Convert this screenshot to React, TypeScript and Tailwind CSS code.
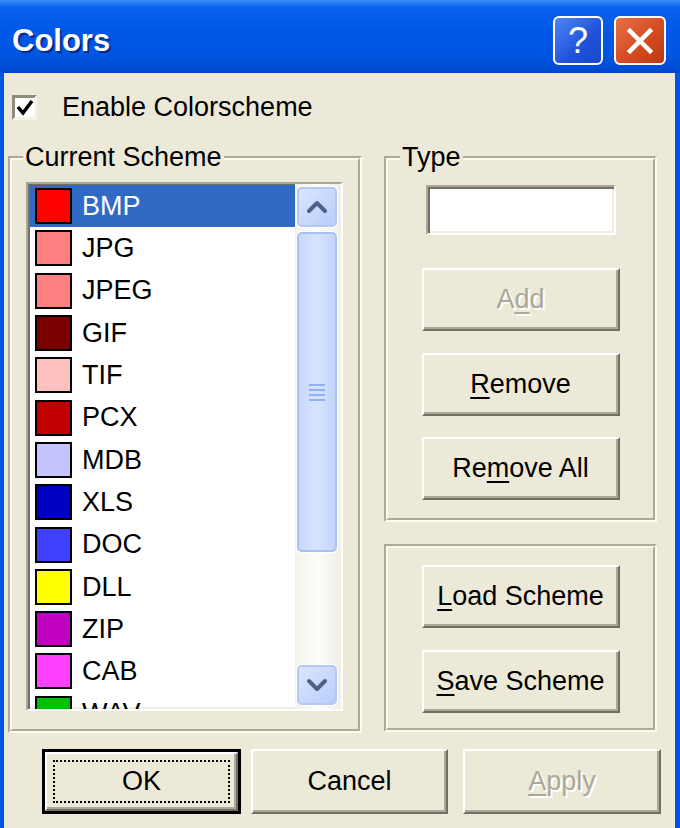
import React from 'react';

const items: [string, string][] = [
    ['BMP', '#ff0000'],
    ['JPG', '#ff8080'],
    ['JPEG', '#ff8080'],
    ['GIF', '#780000'],
    ['TIF', '#ffc0c0'],
    ['PCX', '#c00000'],
    ['MDB', '#c4c4ff'],
    ['XLS', '#0000c0'],
    ['DOC', '#4040ff'],
    ['DLL', '#ffff00'],
    ['ZIP', '#c000c0'],
    ['CAB', '#ff40ff'],
    ['WAV', '#00c000'],
];

const raised =
    'bg-[#ece9d8] border-2 border-t-white border-l-white border-b-[#716f64] border-r-[#716f64] shadow-[inset_-2px_-2px_0_#aca899]';
const etched = 'border-4 [border-style:groove] border-[#fffbea]';
const sunken =
    'border-2 border-t-[#aca899] border-l-[#aca899] border-b-white border-r-white shadow-[inset_2px_2px_0_#716f64,inset_-2px_-2px_0_#f1efe2]';

function Btn({ children, w = 'w-[198px]', h = 'h-[63px]', disabled = false }: { children: React.ReactNode; w?: string; h?: string; disabled?: boolean }) {
    return (
        <div
            className={`${w} ${h} ${raised} flex items-center justify-center text-[27px] ${
                disabled ? 'text-[#aca899] [text-shadow:2px_2px_0_#fff]' : 'text-black'
            }`}
        >
            {children}
        </div>
    );
}

function Chevron({ up }: { up?: boolean }) {
    return (
        <svg width="22" height="14" viewBox="0 0 22 14">
            <path
                d={up ? 'M3 11 L11 3 L19 11' : 'M3 3 L11 11 L19 3'}
                fill="none"
                stroke="#4d6185"
                strokeWidth="4"
                strokeLinecap="round"
                strokeLinejoin="round"
            />
        </svg>
    );
}

const scrollBtn =
    'h-[40px] rounded-[5px] border-2 border-[#b4c8f4] bg-[linear-gradient(135deg,#dbe6fe,#b8cdfa)] shadow-[0_0_0_1px_#fff] flex items-center justify-center';

export default function App() {
    return (
        <div className="w-[680px] h-[828px] bg-[#0054e3] flex flex-col overflow-hidden font-['Liberation_Sans',Arial,sans-serif]">
            {/* title bar */}
            <div className="h-[73px] shrink-0 flex items-center pl-[12px] pr-[14px] bg-[linear-gradient(180deg,#3a8cf8_0%,#0a62ee_10%,#0058e6_40%,#0054e1_80%,#0046cc_100%)]">
                <div className="flex-1 text-white font-bold text-[31px] pt-[10px] [text-shadow:2px_2px_0_#0a2a8a]">Colors</div>
                <div className="flex gap-[11px] mt-[8px]">
                    <div className="w-[50px] h-[49px] rounded-[6px] border-2 border-white bg-[linear-gradient(135deg,#4f86f7,#1f52da_60%,#1a47c4)] flex items-center justify-center text-white text-[36px] leading-none">
                        ?
                    </div>
                    <div className="w-[52px] h-[49px] rounded-[6px] border-2 border-white bg-[linear-gradient(135deg,#e8704a,#d2491f_60%,#bb3a14)] flex items-center justify-center">
                        <svg width="30" height="30" viewBox="0 0 30 30">
                            <path d="M5 5 L25 25 M25 5 L5 25" stroke="#fff" strokeWidth="4.5" strokeLinecap="square" />
                        </svg>
                    </div>
                </div>
            </div>

            {/* body */}
            <div className="flex-1 ml-[4px] mr-[5px] bg-[#ece9d8] flex flex-col text-[27px] text-black">
                {/* checkbox */}
                <div className="flex items-center pl-[8px] pt-[21px]">
                    <div className="w-[25px] h-[25px] bg-white border-[3px] border-t-[#8f8d80] border-l-[#8f8d80] border-b-[#f4f3ee] border-r-[#f4f3ee] flex items-center justify-center">
                        <svg width="18" height="18" viewBox="0 0 18 18">
                            <path d="M2 8 L7 14 L16 2" fill="none" stroke="#000" strokeWidth="3.5" />
                        </svg>
                    </div>
                    <span className="ml-[25px] leading-[27px]">Enable Colorscheme</span>
                </div>

                <div className="flex mt-[23px] pl-[4px] gap-[22px]">
                    {/* Current Scheme */}
                    <fieldset className={`w-[354px] h-[589px] ${etched}`}>
                        <legend className="ml-[11px] px-[2px] leading-[27px]">Current Scheme</legend>
                        <div className={`mt-[11px] ml-[14px] w-[317px] h-[529px] flex ${sunken} bg-white`}>
                            <div className="flex-1 overflow-hidden pt-[1px] pl-[2px]">
                                {items.map(([name, color], i) => (
                                    <div
                                        key={name}
                                        className={`h-[42.3px] flex items-center ${i === 0 ? 'bg-[#316ac5] text-white' : ''}`}
                                    >
                                        <div className="ml-[5px] w-[37px] h-[36px] border-2 border-black" style={{ backgroundColor: color }} />
                                        <span className="ml-[10px]">{name}</span>
                                    </div>
                                ))}
                            </div>
                            <div className="w-[46px] flex flex-col pt-[3px] pb-[4px] pl-[2px] pr-[4px] bg-[linear-gradient(90deg,#f4f2ea,#fdfdfa_50%,#f0eee5)]">
                                <div className={scrollBtn}>
                                    <Chevron up />
                                </div>
                                <div className="mt-[5px] h-[320px] rounded-[5px] border-2 border-[#a9c1f3] bg-[linear-gradient(90deg,#c6d8fc,#d6e4fe_50%,#c2d5fb)] shadow-[0_0_0_1px_#fff] flex flex-col items-center justify-center gap-[3px]">
                                    {[0, 1, 2, 3].map((k) => (
                                        <div key={k} className="w-[16px] h-[2px] bg-[#8eb0f4]" />
                                    ))}
                                </div>
                                <div className="flex-1" />
                                <div className={scrollBtn}>
                                    <Chevron />
                                </div>
                            </div>
                        </div>
                    </fieldset>

                    {/* right column */}
                    <div className="w-[273px] flex flex-col gap-[22px]">
                        <fieldset className={`h-[378px] ${etched} flex flex-col items-center`}>
                            <legend className="ml-[12px] px-[2px] leading-[27px]">Type</legend>
                            <div className={`mt-[14px] w-[190px] h-[50px] bg-white ${sunken}`} />
                            <div className="mt-[33px]">
                                <Btn disabled>
                                    A<span className="underline underline-offset-4">d</span>d
                                </Btn>
                            </div>
                            <div className="mt-[22px]">
                                <Btn>
                                    <span className="underline underline-offset-4">R</span>emove
                                </Btn>
                            </div>
                            <div className="mt-[21px]">
                                <Btn>
                                    Re<span className="underline underline-offset-4">m</span>ove All
                                </Btn>
                            </div>
                        </fieldset>
                        <div className={`h-[188px] ${etched} flex flex-col items-center pt-[17px] gap-[22px]`}>
                            <Btn>
                                <span className="underline underline-offset-4">L</span>oad Scheme
                            </Btn>
                            <Btn>
                                <span className="underline underline-offset-4">S</span>ave Scheme
                            </Btn>
                        </div>
                    </div>
                </div>

                {/* bottom buttons */}
                <div className="flex mt-[16px] pl-[38px]">
                    <div className="w-[199px] h-[65px] border-[3px] border-black">
                        <div className={`w-full h-full ${raised} p-[6px]`}>
                            <div className="w-full h-full border-2 border-dotted border-black flex items-center justify-center">OK</div>
                        </div>
                    </div>
                    <div className="ml-[10px]">
                        <Btn w="w-[197px]" h="h-[65px]">Cancel</Btn>
                    </div>
                    <div className="ml-[15px]">
                        <Btn w="w-[198px]" h="h-[65px]" disabled>
                            <span className="underline underline-offset-4">A</span>pply
                        </Btn>
                    </div>
                </div>
            </div>
        </div>
    );
}
